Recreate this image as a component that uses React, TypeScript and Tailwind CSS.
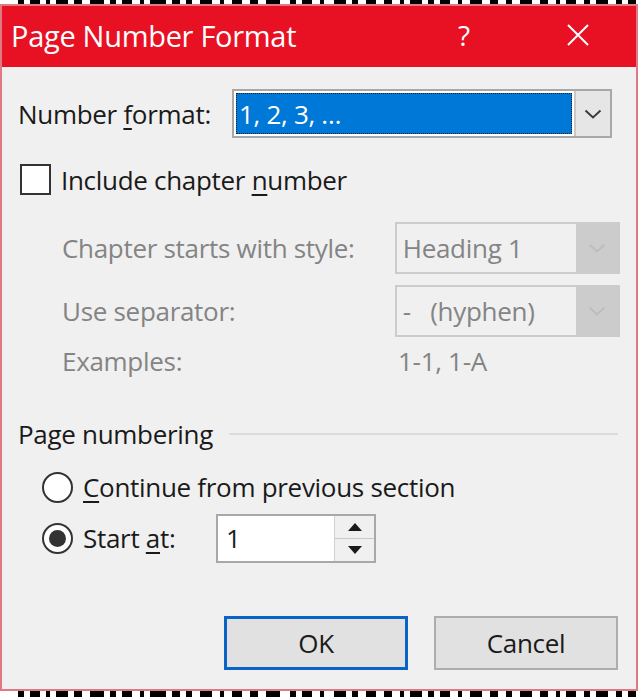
import React from "react";

const dashesTop = [
  [18, 6], [30, 10], [46, 4], [56, 12], [74, 8], [90, 14], [110, 6], [122, 10], [140, 4], [150, 16], [172, 8], [186, 6], [200, 12], [220, 4], [232, 10], [250, 8], [266, 14], [290, 6], [302, 10], [320, 4], [334, 12], [352, 6], [366, 10], [384, 8], [400, 4], [410, 12], [428, 6], [440, 10], [458, 4], [470, 12], [490, 8], [506, 6], [520, 12], [540, 8], [556, 4], [566, 10], [584, 6], [596, 12], [616, 6], [628, 8],
];

function Strip({ className }: { className: string }) {
  return (
    <div className={"relative bg-white " + className}>
      {dashesTop.map(([x, w], i) => (
        <div key={i} className="absolute top-0 h-full bg-black" style={{ left: x, width: w }} />
      ))}
    </div>
  );
}

function Chevron({ color }: { color: string }) {
  return (
    <svg width="18" height="10" viewBox="0 0 18 10" fill="none">
      <path d="M1.5 1.5 L9 8.5 L16.5 1.5" stroke={color} strokeWidth="2" />
    </svg>
  );
}

export default function App() {
  return (
    <div
      className="w-[640px] h-[697px] bg-white overflow-hidden flex flex-col text-[#1a1a1a] text-[26px] leading-none"
      style={{ fontFamily: '"Open Sans", "Noto Sans", sans-serif' }}
    >
      <Strip className="h-[4px] shrink-0" />
      <div className="w-[638px] h-[687px] shrink-0 border-2 border-[#e07a82] bg-[#f0f0f0] flex flex-col">
        {/* Title bar */}
        <div className="h-[61px] shrink-0 bg-[#e81123] text-white flex items-center pl-[9px]">
          <span className="text-[29px] tracking-[-0.3px] -mt-[3px]">Page Number Format</span>
          <span className="ml-auto mr-[97px] text-[28px] -mt-[3px]">?</span>
          <svg className="mr-[47px] -mt-[3px]" width="22" height="22" viewBox="0 0 22 22">
            <path d="M1 1 L21 21 M21 1 L1 21" stroke="white" strokeWidth="2" />
          </svg>
        </div>

        {/* Body */}
        <div className="flex flex-col pl-[16px] pr-[16px]">
          {/* Number format */}
          <div className="mt-[22px] h-[49px] flex items-center">
            <span className="w-[214px] tracking-[-0.3px]">
              Number <span className="underline underline-offset-[4px]">f</span>ormat:
            </span>
            <div className="w-[380px] h-[49px] border-2 border-[#a8a8a8] bg-white flex items-stretch">
              <div className="flex-1 m-[2px] bg-[#0078d7] border border-dotted border-[#1f1f1f] text-white flex items-center pl-[2px] tracking-[-0.3px]">
                1, 2, 3, …
              </div>
              <div className="w-[36px] bg-[#e6e6e6] border-l-2 border-[#c8c8c8] flex items-center justify-center">
                <Chevron color="#3c3c3c" />
              </div>
            </div>
          </div>

          {/* Checkbox */}
          <div className="mt-[26px] h-[31px] flex items-center">
            <div className="ml-[2px] w-[31px] h-[31px] border-2 border-[#333333] bg-white" />
            <span className="ml-[10px] tracking-[-0.3px]">
              Include chapter <span className="underline underline-offset-[4px]">n</span>umber
            </span>
          </div>

          {/* Chapter starts with */}
          <div className="mt-[27px] h-[52px] flex items-center text-[#848484] pl-[44px]">
            <span className="w-[334px] tracking-[-0.3px]">Chapter starts with style:</span>
            <div className="w-[226px] h-[52px] border-2 border-[#cccccc] bg-[#f0f0f0] flex items-stretch">
              <div className="flex-1 flex items-center pl-[6px] tracking-[-0.3px]">Heading 1</div>
              <div className="w-[42px] bg-[#cccccc] flex items-center justify-center">
                <Chevron color="#bdbdbd" />
              </div>
            </div>
          </div>

          {/* Separator */}
          <div className="mt-[11px] h-[52px] flex items-center text-[#848484] pl-[44px]">
            <span className="w-[334px] tracking-[-0.3px]">Use separator:</span>
            <div className="w-[226px] h-[52px] border-2 border-[#cccccc] bg-[#f0f0f0] flex items-stretch">
              <div className="flex-1 flex items-center pl-[6px] tracking-[-0.3px] whitespace-pre">-   (hyphen)</div>
              <div className="w-[42px] bg-[#cccccc] flex items-center justify-center">
                <Chevron color="#bdbdbd" />
              </div>
            </div>
          </div>

          {/* Examples */}
          <div className="mt-[6px] h-[36px] flex items-center text-[#848484] pl-[44px]">
            <span className="w-[336px] tracking-[-0.3px]">Examples:</span>
            <span className="tracking-[-0.3px]">1-1, 1-A</span>
          </div>

          {/* Page numbering */}
          <div className="mt-[37px] h-[36px] flex items-center">
            <span className="tracking-[-0.3px]">Page numbering</span>
            <div className="ml-[16px] flex-1 h-[2px] bg-[#dcdcdc] mr-[2px]" />
          </div>

          {/* Radio 1 */}
          <div className="mt-[18px] h-[34px] flex items-center pl-[24px]">
            <div className="w-[31px] h-[31px] rounded-full border-2 border-[#333333] bg-white" />
            <span className="ml-[10px] tracking-[-0.3px]">
              <span className="underline underline-offset-[4px]">C</span>ontinue from previous section
            </span>
          </div>

          {/* Radio 2 */}
          <div className="mt-[10px] h-[48px] flex items-center pl-[24px]">
            <div className="w-[31px] h-[31px] rounded-full border-2 border-[#333333] bg-white flex items-center justify-center">
              <div className="w-[17px] h-[17px] rounded-full bg-[#333333]" />
            </div>
            <span className="ml-[10px] w-[133px] tracking-[-0.3px]">
              Start <span className="underline underline-offset-[4px]">a</span>t:
            </span>
            <div className="w-[160px] h-[49px] border-2 border-[#a8a8a8] bg-white flex items-stretch">
              <div className="flex-1 flex items-center pl-[8px]">1</div>
              <div className="w-[40px] flex flex-col border-l border-[#d0d0d0] bg-[#f0f0f0]">
                <div className="flex-1 flex items-center justify-center border-b border-[#c8c8c8]">
                  <svg width="14" height="8" viewBox="0 0 14 8"><path d="M7 0 L14 8 L0 8 Z" fill="#1a1a1a" /></svg>
                </div>
                <div className="flex-1 flex items-center justify-center">
                  <svg width="14" height="8" viewBox="0 0 14 8"><path d="M0 0 L14 0 L7 8 Z" fill="#1a1a1a" /></svg>
                </div>
              </div>
            </div>
          </div>

          {/* Buttons */}
          <div className="mt-[54px] h-[54px] flex items-stretch justify-end pr-[2px] gap-[26px]">
            <div className="w-[184px] border-[3px] border-[#0a64c8] bg-[#e1e1e1] flex items-center justify-center tracking-[-0.3px]">
              OK
            </div>
            <div className="w-[184px] border-2 border-[#adadad] bg-[#e1e1e1] flex items-center justify-center tracking-[-0.3px]">
              Cancel
            </div>
          </div>
        </div>
      </div>
      <Strip className="h-[6px] shrink-0" />
    </div>
  );
}
